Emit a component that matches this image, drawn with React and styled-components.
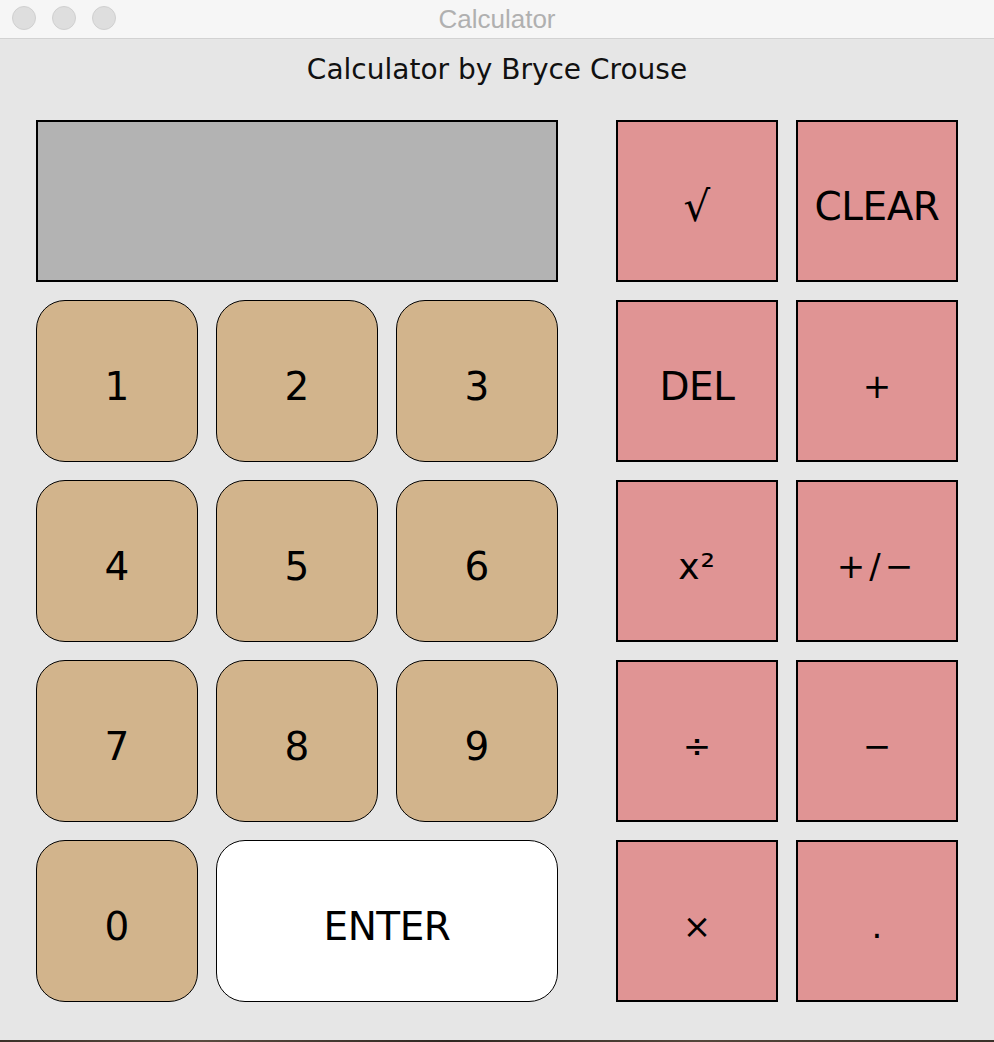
import React from "react"
import styled, { createGlobalStyle } from 'styled-components'

const Global = createGlobalStyle`
  html, body{
    margin: 0;
    padding: 0;
    background: #e6e6e6;
  }
`

const Window = styled.div`
  width: 994px;
  height: 1040px;
  background: #e6e6e6;
  display: flex;
  flex-direction: column;
  font-family: 'DejaVu Sans', 'Noto Sans', sans-serif;
`

const TitleBar = styled.div`
  height: 38px;
  background: #f6f6f6;
  border-bottom: 1px solid #d2d2d2;
  display: flex;
  align-items: center;
  justify-content: center;
  position: relative;
  > span{
    font-family: 'Liberation Sans', Arial, sans-serif;
    font-size: 26px;
    color: #b0b0b0;
  }
`

const Lights = styled.div`
  position: absolute;
  left: 12px;
  top: 6px;
  display: flex;
  gap: 16px;
`

const Light = styled.div`
  width: 22px;
  height: 22px;
  border-radius: 50%;
  background: #dedede;
  border: 1px solid #d0d0d0;
`

const Heading = styled.h1`
  margin: 0;
  height: 62px;
  line-height: 62px;
  text-align: center;
  font-size: 28px;
  font-weight: normal;
  color: #111;
`

const Keypad = styled.div`
  display: flex;
  gap: 58px;
  padding: 0 36px;
  margin-top: 19px;
`

const Grid = styled.div`
  display: grid;
  grid-template-columns: repeat(${x => x.cols}, 162px);
  grid-auto-rows: 162px;
  gap: 18px;
`

const Display = styled.div`
  grid-column: span 3;
  background: #b3b3b3;
  border: 2px solid #000;
  box-sizing: border-box;
`

const Key = styled.div`
  grid-column: span ${x => x.span || 1};
  box-sizing: border-box;
  display: flex;
  align-items: center;
  justify-content: center;
  padding-top: 10px;
  font-size: 39px;
  color: #000;
  letter-spacing: ${x => x.spacing || '0'};
`

const NumKey = styled(Key)`
  background: ${x => x.white ? '#fff' : '#d2b48c'};
  border: 1.5px solid #000;
  border-radius: 29px;
`

const OpKey = styled(Key)`
  background: #e09494;
  border: 2px solid #000;
  font-size: ${x => x.size || '39px'};
`

const Desktop = styled.div`
  height: 2px;
  background: linear-gradient(90deg, #3b3129, #5a4c40 20%, #2f2822 45%, #54473b 70%, #3a3129);
`

const ops = [
  { label: '√', size: '42px' },
  { label: 'CLEAR', spacing: '-0.5px' },
  { label: 'DEL', spacing: '-0.5px' },
  { label: '+', size: '34px' },
  { label: 'x²', size: '36px', spacing: '1px' },
  { label: '+/−', size: '34px', spacing: '4px' },
  { label: '÷', size: '34px' },
  { label: '−', size: '34px' },
  { label: '×', size: '34px' },
  { label: '.', size: '34px' },
]

export default function App() {
  return (
    <>
      <Global />
      <Window>
        <TitleBar>
          <Lights><Light /><Light /><Light /></Lights>
          <span>Calculator</span>
        </TitleBar>
        <Heading>Calculator by Bryce Crouse</Heading>
        <Keypad>
          <Grid cols={3}>
            <Display />
            {['1', '2', '3', '4', '5', '6', '7', '8', '9', '0'].map(n =>
              <NumKey key={n}>{n}</NumKey>
            )}
            <NumKey white span={2} spacing="-0.5px">ENTER</NumKey>
          </Grid>
          <Grid cols={2}>
            {ops.map(o =>
              <OpKey key={o.label} size={o.size} spacing={o.spacing}>{o.label}</OpKey>
            )}
          </Grid>
        </Keypad>
      </Window>
      <Desktop />
    </>
  )
}
